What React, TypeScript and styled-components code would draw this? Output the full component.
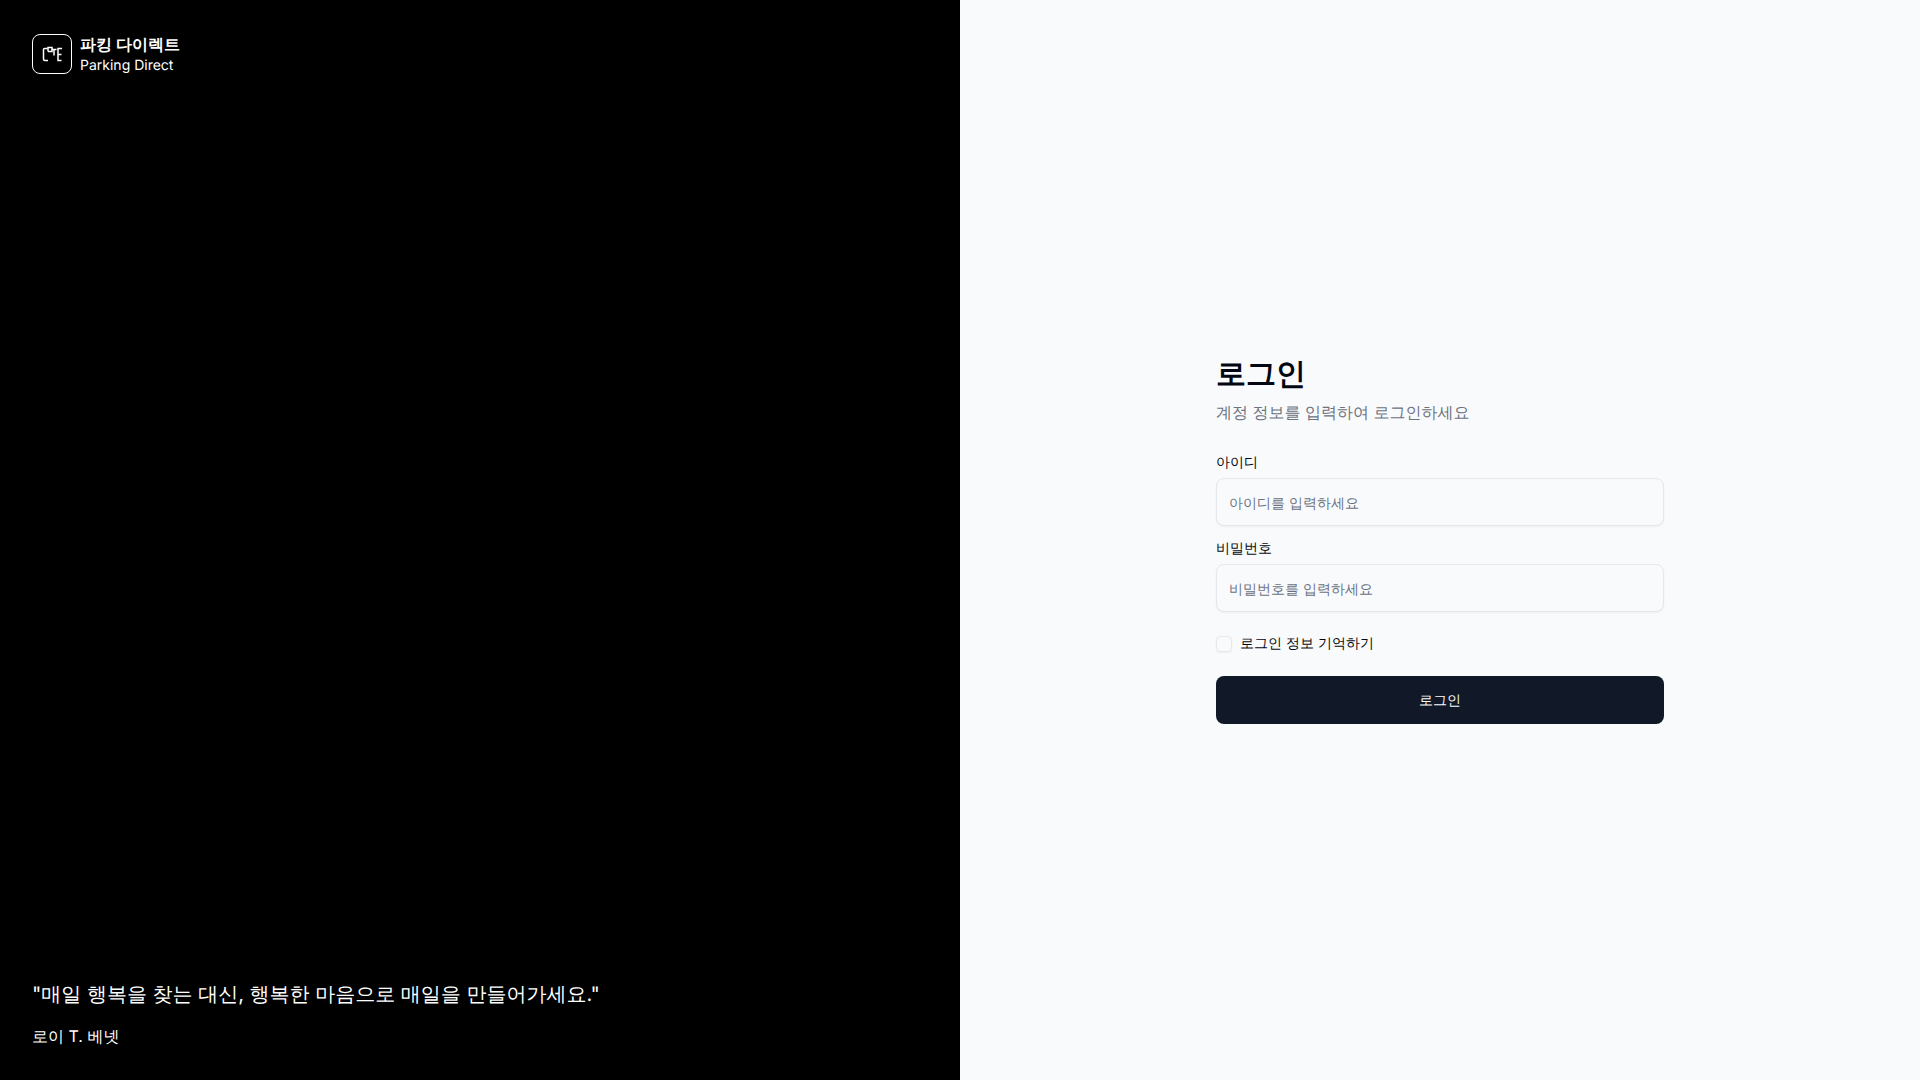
import React from 'react';
import styled, { createGlobalStyle } from 'styled-components';

const GlobalStyle = createGlobalStyle`
  * {
    box-sizing: border-box;
  }

  body {
    margin: 0;
    font-family: Inter, sans-serif;
    -webkit-font-smoothing: antialiased;
    -moz-osx-font-smoothing: grayscale;
    text-rendering: geometricPrecision;
  }
`;

const Page = styled.div`
  display: grid;
  grid-template-columns: 1fr 1fr;
  height: 100vh;
`;

const BrandPanel = styled.aside`
  display: flex;
  flex-direction: column;
  justify-content: space-between;
  padding: 32px;
  background-color: #000;
  color: #fff;
`;

const Brand = styled.div`
  display: flex;
  align-items: center;
  gap: 8px;
`;

const LogoBox = styled.div`
  display: flex;
  align-items: center;
  justify-content: center;
  width: 40px;
  height: 40px;
  border: 1px solid #fff;
  border-radius: 8px;
`;

const BrandText = styled.div`
  display: flex;
  flex-direction: column;
`;

const BrandName = styled.span`
  font-size: 16px;
  line-height: 24px;
  font-weight: 600;
`;

const BrandSub = styled.span`
  font-size: 14px;
  line-height: 20px;
`;

const Quote = styled.blockquote`
  display: flex;
  flex-direction: column;
  gap: 16px;
  margin: 0;
`;

const QuoteText = styled.p`
  margin: 0;
  font-size: 20px;
  line-height: 28px;
`;

const QuoteAuthor = styled.footer`
  font-size: 16px;
  line-height: 24px;
`;

const FormPanel = styled.main`
  display: flex;
  align-items: center;
  justify-content: center;
  background-color: #f9fafb;
`;

const FormColumn = styled.div`
  width: 448px;
`;

const Title = styled.h1`
  margin: 0 0 8px;
  font-size: 30px;
  line-height: 36px;
  font-weight: 700;
  color: #030712;
`;

const Subtitle = styled.p`
  margin: 0 0 32px;
  font-size: 16px;
  line-height: 24px;
  color: #6b7280;
`;

const Form = styled.form`
  display: flex;
  flex-direction: column;
`;

const Field = styled.div`
  display: flex;
  flex-direction: column;
  gap: 8px;
  margin-bottom: 16px;
`;

const Label = styled.label`
  font-size: 14px;
  line-height: 14px;
  font-weight: 400;
  color: #030712;
`;

const Input = styled.input`
  height: 48px;
  padding: 0 12px;
  border: 1px solid #e5e7eb;
  border-radius: 8px;
  background-color: #f9fafb;
  box-shadow: 0 1px 2px rgba(0, 0, 0, 0.05);
  font-family: inherit;
  font-size: 14px;
  color: #030712;

  &::placeholder {
    color: #6b7280;
  }
`;

const RememberRow = styled.div`
  display: flex;
  align-items: center;
  gap: 8px;
  margin: 8px 0 24px;
`;

const Checkbox = styled.button`
  width: 16px;
  height: 16px;
  padding: 0;
  border: 1px solid #e5e7eb;
  border-radius: 4px;
  background-color: transparent;
  box-shadow: 0 1px 2px rgba(0, 0, 0, 0.05);
`;

const SubmitButton = styled.button`
  height: 48px;
  border: none;
  border-radius: 8px;
  background-color: #111827;
  font-family: inherit;
  font-size: 14px;
  font-weight: 400;
  color: #f9fafb;
`;

const LogoIcon = () => (
  <svg width="24" height="24" viewBox="0 0 24 24" fill="none" stroke="currentColor" strokeWidth="1.5">
    <path d="M7.5 6.5H4.5Q3.5 6.5 3.5 7.5V17Q3.5 18.5 5 18.5H8" />
    <path d="M8 9.5V5.5H12V9.5H8" />
    <path d="M12 7.5H16.5" />
    <path d="M14 7.5V13.5" />
    <path d="M22 6.5H18V18.5H21.5" />
    <path d="M18 12.5H21.5" />
  </svg>
);

const App = () => (
  <Page>
    <GlobalStyle />
    <BrandPanel>
      <Brand>
        <LogoBox>
          <LogoIcon />
        </LogoBox>
        <BrandText>
          <BrandName>파킹 다이렉트</BrandName>
          <BrandSub>Parking Direct</BrandSub>
        </BrandText>
      </Brand>
      <Quote>
        <QuoteText>"매일 행복을 찾는 대신, 행복한 마음으로 매일을 만들어가세요."</QuoteText>
        <QuoteAuthor>로이 T. 베넷</QuoteAuthor>
      </Quote>
    </BrandPanel>
    <FormPanel>
      <FormColumn>
        <Title>로그인</Title>
        <Subtitle>계정 정보를 입력하여 로그인하세요</Subtitle>
        <Form>
          <Field>
            <Label htmlFor="username">아이디</Label>
            <Input id="username" type="text" placeholder="아이디를 입력하세요" />
          </Field>
          <Field>
            <Label htmlFor="password">비밀번호</Label>
            <Input id="password" type="password" placeholder="비밀번호를 입력하세요" />
          </Field>
          <RememberRow>
            <Checkbox type="button" id="remember" aria-label="로그인 정보 기억하기" />
            <Label htmlFor="remember">로그인 정보 기억하기</Label>
          </RememberRow>
          <SubmitButton type="submit">로그인</SubmitButton>
        </Form>
      </FormColumn>
    </FormPanel>
  </Page>
);

export default App;
